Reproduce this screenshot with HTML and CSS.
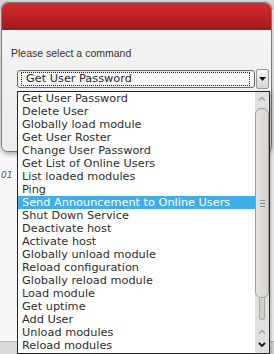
FILE: index.html
```html
<!DOCTYPE html>
<html lang="en">
<head>
  <meta charset="UTF-8" />
  <title>Run command</title>
  <meta name="viewport" content="width=device-width, initial-scale=1" />
  <link rel="stylesheet" href="styles.css">
</head>
<body>

  <div class="screen">
    <section class="dialog">
      <header class="dialog-head"></header>

      <div class="dialog-body">
        <p class="prompt">Please select a command</p>

        <div class="picker">
          <div class="combo">
            <div class="combo-field">
              <span class="combo-focus">Get User Password</span>
            </div>
            <div class="combo-btn">
              <svg width="7" height="4" viewBox="0 0 7 4"><polygon points="0,0 7,0 3.5,4" fill="#111"/></svg>
            </div>
          </div>

          <div class="popup">
            <ul class="options">
              <li>Get User Password</li>
              <li>Delete User</li>
              <li>Globally load module</li>
              <li>Get User Roster</li>
              <li>Change User Password</li>
              <li>Get List of Online Users</li>
              <li>List loaded modules</li>
              <li>Ping</li>
              <li class="is-current">Send Announcement to Online Users</li>
              <li>Shut Down Service</li>
              <li>Deactivate host</li>
              <li>Activate host</li>
              <li>Globally unload module</li>
              <li>Reload configuration</li>
              <li>Globally reload module</li>
              <li>Load module</li>
              <li>Get uptime</li>
              <li>Add User</li>
              <li>Unload modules</li>
              <li>Reload modules</li>
            </ul>

            <div class="scrollbar">
              <div class="sb-arrow">
                <svg width="8" height="5" viewBox="0 0 8 5"><polyline points="1,4.5 4,1.5 7,4.5" fill="none" stroke="#a2a2a2" stroke-width="1.4"/></svg>
              </div>
              <div class="sb-thumb">
                <span class="sb-grip"></span>
                <span class="sb-grip"></span>
                <span class="sb-grip"></span>
              </div>
              <div class="sb-groove"></div>
              <div class="sb-arrow sb-arrow-low">
                <svg width="8" height="5" viewBox="0 0 8 5"><polyline points="1,4.5 4,1.5 7,4.5" fill="none" stroke="#a2a2a2" stroke-width="1.4"/></svg>
              </div>
              <div class="sb-arrow">
                <svg width="8" height="5" viewBox="0 0 8 5"><polyline points="1,1 4,4 7,1" fill="none" stroke="#111" stroke-width="1.8"/></svg>
              </div>
            </div>
          </div>
        </div>
      </div>
    </section>

    <div class="stamp">01</div>

    <div class="statusbar"></div>
  </div>

</body>
</html>
```

FILE: styles.css
```css
:root {
  --color-red-top: #d52b2f;
  --color-red-bottom: #9e1a1c;
  --color-body: #f1f1f1;
  --color-text: #333333;
  --color-select: #3daee9;
  --color-scroll: #e2e0dd;
  --font-ui: 'Liberation Sans', Arial, sans-serif;
  --font-list: 'DejaVu Sans', sans-serif;
}

html, body {
  margin: 0;
  padding: 0;
}

body {
  width: 274px;
  height: 354px;
  overflow: hidden;
  background: #f8f8f8;
}

.screen {
  height: 354px;
  display: flex;
  flex-direction: column;
  background: linear-gradient(to bottom, #d8d8d8 0, #d8d8d8 10px, #f8f8f8 10px);
}

.dialog {
  margin: 2px 2px 0 1px;
  border: 1px solid #7a7a7a;
  border-radius: 7px;
  background: var(--color-body);
  box-shadow: 0 2px 5px rgba(0, 0, 0, 0.35);
}

.dialog-head {
  height: 27px;
  border-radius: 6px 6px 0 0;
  background: linear-gradient(to bottom, var(--color-red-top), #bb2226 55%, var(--color-red-bottom));
}

.dialog-body {
  height: 121px;
  box-sizing: border-box;
  padding: 17px 0 0 9px;
  border-radius: 0 0 6px 6px;
  background: linear-gradient(to bottom, #f4f4f4, #ececec);
}

.prompt {
  margin: 0;
  font-family: var(--font-ui);
  font-size: 10.5px;
  line-height: 13px;
  color: var(--color-text);
}

.picker {
  position: relative;
  margin: 10px 0 0 6px;
}

.combo {
  display: flex;
  gap: 1px;
  height: 18px;
}

.combo-field {
  width: 238px;
  box-sizing: border-box;
  border: 1px solid #6a6a6a;
  border-radius: 3px;
  background: linear-gradient(to bottom, #ffffff, #f0f0f0);
  box-shadow: inset 0 1px 1px rgba(0, 0, 0, 0.12);
}

.combo-focus {
  display: block;
  margin: 1px 4px 0 3px;
  height: 14px;
  box-sizing: border-box;
  padding-left: 4px;
  border: 1px dotted #222;
  font-family: var(--font-list);
  font-size: 11.3px;
  line-height: 12px;
  color: #2b2b2b;
  white-space: nowrap;
}

.combo-btn {
  width: 13px;
  height: 20px;
  margin-top: -1px;
  box-sizing: border-box;
  border: 1px solid #9a9a9a;
  border-radius: 2px;
  background: linear-gradient(to bottom, #f6f6f6, #d6d6d6);
  display: flex;
  justify-content: center;
  align-items: center;
}

.popup {
  position: absolute;
  top: 21px;
  left: 0;
  width: 253px;
  height: 263px;
  box-sizing: border-box;
  border: 1px solid #262626;
  background: #ffffff;
  display: flex;
  box-shadow: 2px 2px 3px rgba(0, 0, 0, 0.25);
}

.options {
  flex: 1;
  margin: 0;
  padding: 0;
  list-style: none;
  overflow: hidden;
}

.options li {
  height: 13px;
  padding-left: 4px;
  font-family: var(--font-list);
  font-size: 11.3px;
  line-height: 13px;
  color: #2e2e2e;
  white-space: nowrap;
}

.options li.is-current {
  background: var(--color-select);
  color: #ffffff;
}

.scrollbar {
  width: 14px;
  background: var(--color-scroll);
  display: flex;
  flex-direction: column;
  align-items: center;
}

.sb-arrow {
  height: 13px;
  display: flex;
  justify-content: center;
  align-items: center;
}

.sb-arrow-low {
  margin-top: auto;
}

.scrollbar .sb-arrow:last-child {
  margin-bottom: 2px;
}

.sb-thumb {
  margin-top: 3px;
  width: 14px;
  height: 190px;
  box-sizing: border-box;
  border: 1px solid #9c9c9c;
  border-radius: 6px;
  background: linear-gradient(to right, #e6e4e1, #d6d3cf);
  display: flex;
  flex-direction: column;
  justify-content: center;
  align-items: center;
  gap: 2px;
}

.sb-grip {
  width: 5px;
  height: 1px;
  background: #8a8a8a;
}

.sb-groove {
  width: 6px;
  height: 22px;
  box-sizing: border-box;
  border: 1px solid #a8a8a8;
  border-top: none;
  border-radius: 0 0 3px 3px;
  background: #d2d0cd;
}

.stamp {
  margin-top: 17px;
  padding-left: 1px;
  font-family: var(--font-list);
  font-style: italic;
  font-size: 9px;
  line-height: 13px;
  color: #555;
}

.statusbar {
  margin-top: auto;
  height: 12px;
  border-top: 1px solid #bcbcbc;
  background: #dadada;
}
```
